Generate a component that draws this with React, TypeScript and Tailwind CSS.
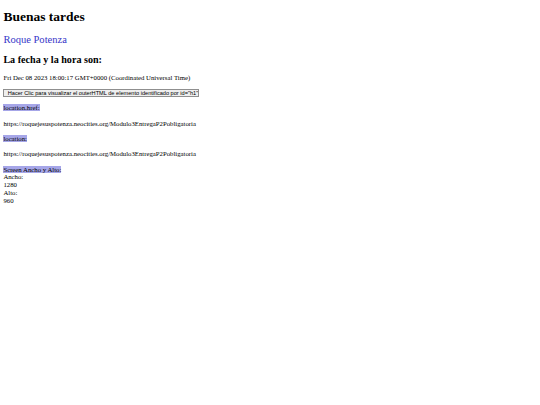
export default function App() {
  const url = 'https://roquejesuspotenza.neocities.org/Modulo3EntregaP2Pobligatoria'

  return (
    <div className="min-h-screen bg-white">
      <div className="[zoom:0.421875] px-[8px] pb-[8px] font-['Liberation_Serif',serif] text-[16px] text-black">
        <h1 className="my-[21.44px] text-[32px] font-bold leading-[1.15]">Buenas tardes</h1>
        <p className="my-[19.92px] text-[25px] leading-[1.15] text-[#3636c8]">Roque Potenza</p>
        <h2 className="my-[19.92px] text-[24px] font-bold leading-[1.15]">La fecha y la hora son:</h2>
        <p className="my-[16px] leading-[1.15]">Fri Dec 08 2023 18:00:17 GMT+0000 (Coordinated Universal Time)</p>
        <button className="mt-[2px] block h-[21px] w-[463px] overflow-hidden whitespace-nowrap border border-[#8f8f8f] bg-[#efefef] px-[8px] text-left font-['Liberation_Sans',sans-serif] text-[13.33px] leading-[1.15]">
          Hacer Clic para visualizar el outerHTML de elemento identificado por id="h1"
        </button>
        <p className="my-[16px] leading-[1.15]">
          <span className="bg-[#a6a6e8]">location.href:</span>
        </p>
        <p className="my-[18px] leading-[1.15]">{url}</p>
        <p className="my-[18px] leading-[1.15]">
          <span className="bg-[#a6a6e8]">location:</span>
        </p>
        <p className="my-[18px] leading-[1.15]">{url}</p>
        <div className="leading-[1.15]">
          <span className="bg-[#a6a6e8]">Screen Ancho y Alto:</span>
          <br />
          Ancho:
          <br />
          1280
          <br />
          Alto:
          <br />
          960
        </div>
      </div>
    </div>
  )
}
